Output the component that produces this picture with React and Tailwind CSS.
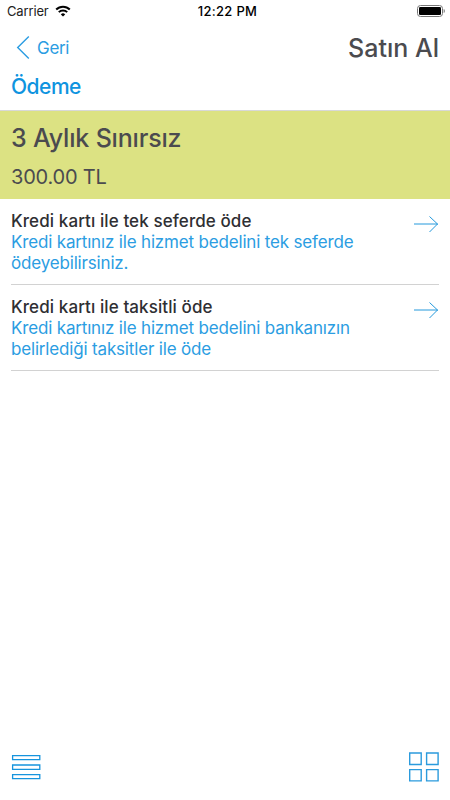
import React from "react";

function StatusBar() {
  return (
    <div className="grid h-[22px] grid-cols-3 items-center pl-[7px] pr-[5px] text-[13px] leading-[22px] text-black">
      <div className="flex items-center gap-[6px]">
        <span className="tracking-[-0.15px] text-[#222]">Carrier</span>
        <svg width="16" height="12" viewBox="0 0 16 12" fill="none" stroke="#000" strokeWidth="2">
          <path d="M1.2 4.5a9.6 9.6 0 0 1 13.6 0M3.8 7.1a6 6 0 0 1 8.4 0" />
          <path d="M8 11.6 5.8 9.4a3.1 3.1 0 0 1 4.4 0Z" fill="#000" stroke="none" />
        </svg>
      </div>
      <span className="whitespace-nowrap pl-[3px] text-center font-medium tracking-[0.3px]">12:22 PM</span>
      <svg className="justify-self-end" width="28" height="12" viewBox="0 0 28 12">
        <rect x="0.5" y="0.5" width="25" height="11" rx="3" fill="none" stroke="#777" />
        <rect x="2" y="2" width="22" height="8" rx="1.3" fill="#000" />
        <path d="M26.7 4v4c1.5-.6 1.5-3.4 0-4Z" fill="#777" />
      </svg>
    </div>
  );
}

function Option({ title, children }) {
  return (
    <div className="flex h-[86px] justify-between border-b border-[#d2d2d2] pt-[12px]">
      <div className="whitespace-nowrap text-[17px] leading-[21px]">
        <div className="font-medium tracking-[0.09px] text-[#2f2f33]">{title}</div>
        <div className="tracking-[-0.17px] text-[#2b9de2]">{children}</div>
      </div>
      <svg className="mt-[4px]" width="26" height="18" viewBox="0 0 26 18" fill="none" stroke="#2499dc">
        <path d="M1 9H25M16.5 1.5 24.5 9 16.5 17" />
      </svg>
    </div>
  );
}

export default function App() {
  return (
    <div className="flex h-[800px] w-[450px] flex-col overflow-hidden bg-white font-['Inter',sans-serif]">
      <StatusBar />
      <header className="flex h-[52px] items-center justify-between pl-[16px] pr-[11px]">
        <div className="flex items-center gap-[7px] text-[#2b9de2]">
          <svg width="14" height="24" viewBox="0 0 14 24" fill="none" stroke="currentColor" strokeWidth="1.4">
            <path d="M12.8 .5 1.7 11.5 12.8 22.5" />
          </svg>
          <span className="pt-[1px] text-[17px] tracking-[-0.3px]">Geri</span>
        </div>
        <h1 className="pt-[2px] text-[25px] font-medium text-[#4b4b4f]">Satın Al</h1>
      </header>
      <h2 className="h-[36px] pl-[11px] text-[21px] font-medium leading-[25px] tracking-[-0.5px] text-[#0f94df]">Ödeme</h2>
      <section className="h-[89px] border-t border-[#d8d8d8] bg-[#dce283] pl-[11px] pt-[11px] text-[#4b4b4f]">
        <div className="text-[25px] font-medium leading-[32px] tracking-[-0.18px]">3 Aylık Sınırsız</div>
        <div className="mt-[9px] text-[20px] leading-[28px] tracking-[-0.2px]">300.00 TL</div>
      </section>
      <main className="grow px-[11px]">
        <Option title="Kredi kartı ile tek seferde öde">
          Kredi kartınız ile hizmet bedelini tek seferde
          <br />
          ödeyebilirsiniz.
        </Option>
        <Option title="Kredi kartı ile taksitli öde">
          Kredi kartınız ile hizmet bedelini bankanızın
          <br />
          belirlediği taksitler ile öde
        </Option>
      </main>
      <footer className="flex h-[48px] justify-between pl-[11px] pr-[11px]">
        <svg className="mt-[3px]" width="30" height="26" viewBox="0 0 30 26" fill="none" stroke="#1694dd" strokeWidth="1.3">
          <path d="M1.6.7h27.2v4h-27.2ZM1.6 10h27.2v4.4h-27.2ZM1.6 19.6h27.2v4h-27.2Z" />
        </svg>
        <svg width="31" height="30" viewBox="0 0 31 30" fill="none" stroke="#2b9bdd" strokeWidth="1.4">
          <path d="M1.7 1h11.5v11.5H1.7ZM18.6 1h11.5v11.5H18.6ZM1.7 17.6h11.5v11.3H1.7ZM18.6 17.6h11.5v11.3H18.6Z" />
        </svg>
      </footer>
    </div>
  );
}
